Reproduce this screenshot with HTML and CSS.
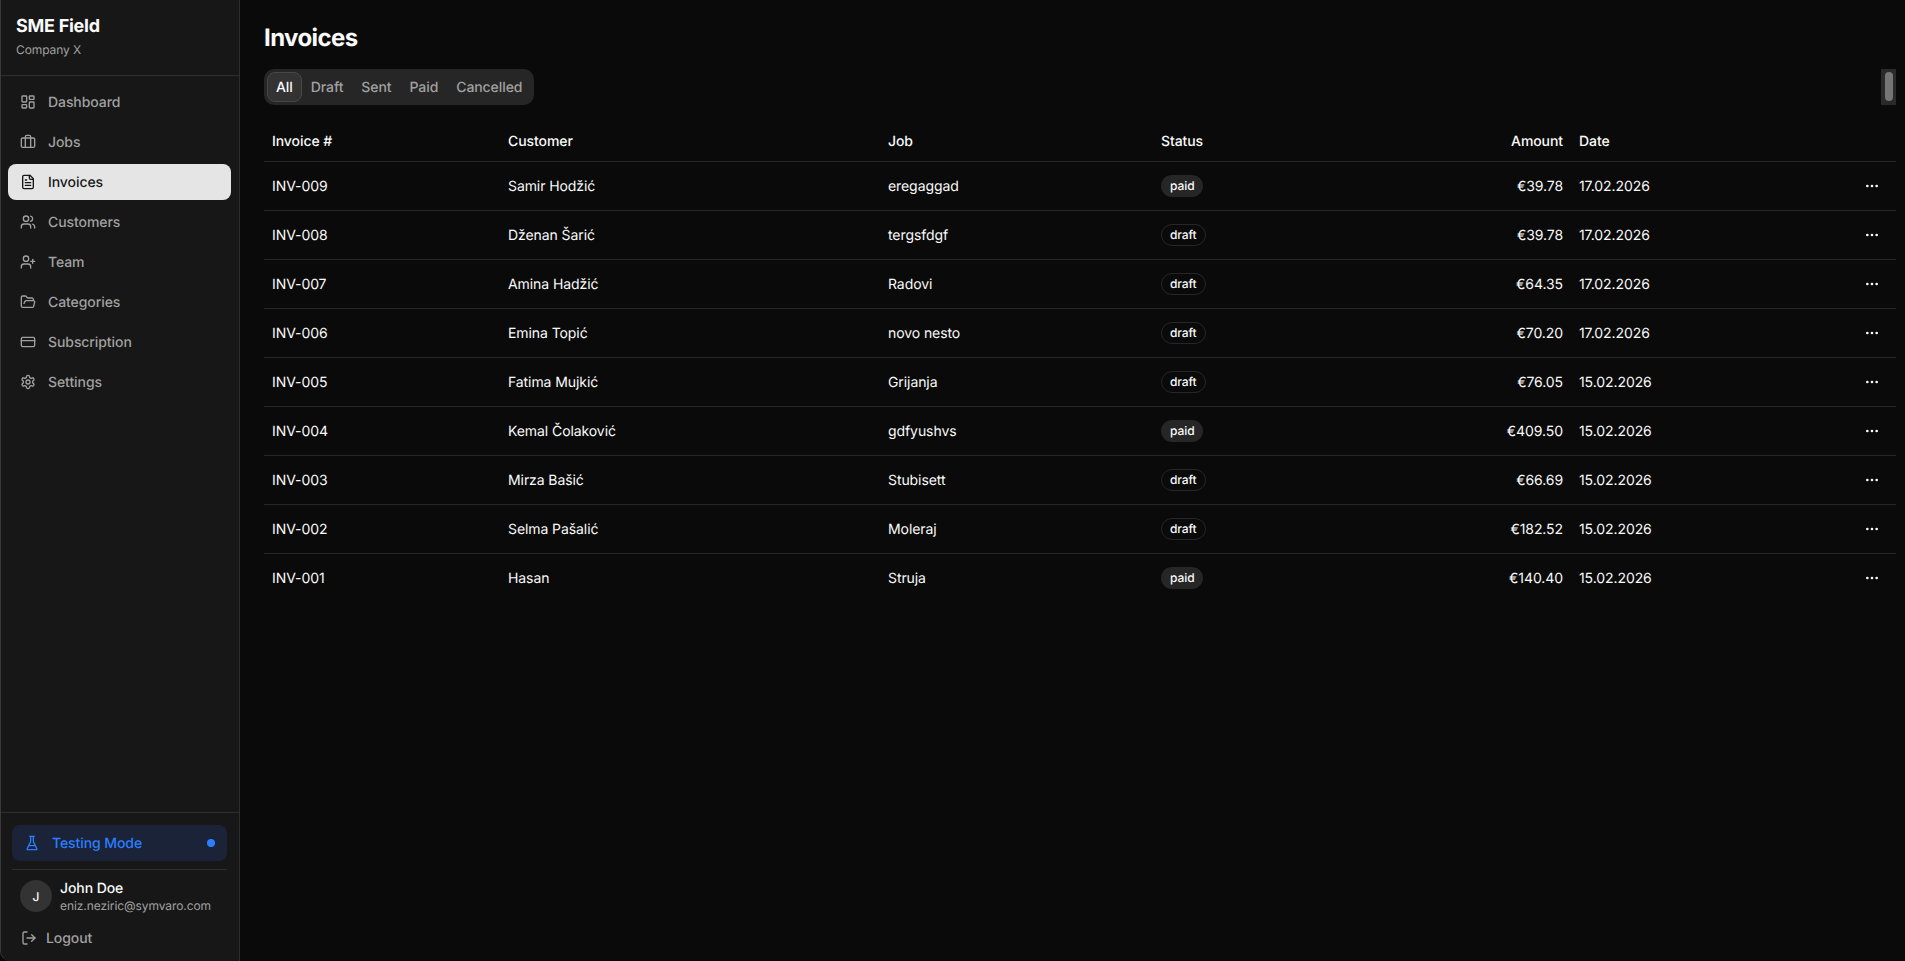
FILE: index.html

```html
<!DOCTYPE html>
<html lang="en">
<head>
  <meta charset="UTF-8">
  <meta name="viewport" content="width=device-width, initial-scale=1.0">
  <title>Invoices</title>
  <link rel="stylesheet" href="styles.css">
</head>
<body>
  <div class="app">
    <aside class="sidebar">
      <div class="brand">
        <div class="brand-name">SME Field</div>
        <div class="brand-company">Company X</div>
      </div>
      <nav class="nav">
        <a href="#" class="nav-item">
          <svg class="icon" viewBox="0 0 24 24"><rect x="3" y="3" width="7" height="9" rx="1"/><rect x="14" y="3" width="7" height="5" rx="1"/><rect x="14" y="12" width="7" height="9" rx="1"/><rect x="3" y="16" width="7" height="5" rx="1"/></svg>
          Dashboard
        </a>
        <a href="#" class="nav-item">
          <svg class="icon" viewBox="0 0 24 24"><path d="M16 20V4a2 2 0 0 0-2-2h-4a2 2 0 0 0-2 2v16"/><rect x="2" y="6" width="20" height="14" rx="2"/></svg>
          Jobs
        </a>
        <a href="#" class="nav-item active">
          <svg class="icon" viewBox="0 0 24 24"><path d="M15 2H6a2 2 0 0 0-2 2v16a2 2 0 0 0 2 2h12a2 2 0 0 0 2-2V7Z"/><path d="M14 2v4a2 2 0 0 0 2 2h4"/><path d="M10 9H8"/><path d="M16 13H8"/><path d="M16 17H8"/></svg>
          Invoices
        </a>
        <a href="#" class="nav-item">
          <svg class="icon" viewBox="0 0 24 24"><path d="M16 21v-2a4 4 0 0 0-4-4H6a4 4 0 0 0-4 4v2"/><circle cx="9" cy="7" r="4"/><path d="M22 21v-2a4 4 0 0 0-3-3.87"/><path d="M16 3.13a4 4 0 0 1 0 7.75"/></svg>
          Customers
        </a>
        <a href="#" class="nav-item">
          <svg class="icon" viewBox="0 0 24 24"><path d="M16 21v-2a4 4 0 0 0-4-4H6a4 4 0 0 0-4 4v2"/><circle cx="9" cy="7" r="4"/><path d="M19 8v6"/><path d="M22 11h-6"/></svg>
          Team
        </a>
        <a href="#" class="nav-item">
          <svg class="icon" viewBox="0 0 24 24"><path d="m6 14 1.5-2.9A2 2 0 0 1 9.24 10H20a2 2 0 0 1 1.94 2.5l-1.54 6a2 2 0 0 1-1.95 1.5H4a2 2 0 0 1-2-2V5a2 2 0 0 1 2-2h3.9a2 2 0 0 1 1.69.9l.81 1.2a2 2 0 0 0 1.67.9H18a2 2 0 0 1 2 2v2"/></svg>
          Categories
        </a>
        <a href="#" class="nav-item">
          <svg class="icon" viewBox="0 0 24 24"><rect x="2" y="5" width="20" height="14" rx="2"/><path d="M2 10h20"/></svg>
          Subscription
        </a>
        <a href="#" class="nav-item">
          <svg class="icon" viewBox="0 0 24 24"><path d="M12.22 2h-.44a2 2 0 0 0-2 2v.18a2 2 0 0 1-1 1.73l-.43.25a2 2 0 0 1-2 0l-.15-.08a2 2 0 0 0-2.73.73l-.22.38a2 2 0 0 0 .73 2.73l.15.1a2 2 0 0 1 1 1.72v.51a2 2 0 0 1-1 1.74l-.15.09a2 2 0 0 0-.73 2.73l.22.38a2 2 0 0 0 2.73.73l.15-.08a2 2 0 0 1 2 0l.43.25a2 2 0 0 1 1 1.73V20a2 2 0 0 0 2 2h.44a2 2 0 0 0 2-2v-.18a2 2 0 0 1 1-1.73l.43-.25a2 2 0 0 1 2 0l.15.08a2 2 0 0 0 2.73-.73l.22-.39a2 2 0 0 0-.73-2.73l-.15-.08a2 2 0 0 1-1-1.74v-.5a2 2 0 0 1 1-1.74l.15-.09a2 2 0 0 0 .73-2.73l-.22-.38a2 2 0 0 0-2.73-.73l-.15.08a2 2 0 0 1-2 0l-.43-.25a2 2 0 0 1-1-1.73V4a2 2 0 0 0-2-2z"/><circle cx="12" cy="12" r="3"/></svg>
          Settings
        </a>
      </nav>
      <div class="sidebar-footer">
        <div class="testing-mode">
          <svg class="icon" viewBox="0 0 24 24"><path d="M10 2v7.53a2 2 0 0 1-.21.9L4.72 20.55A1 1 0 0 0 5.61 22h12.78a1 1 0 0 0 .9-1.45l-5.07-10.12a2 2 0 0 1-.22-.9V2"/><path d="M8.5 2h7"/><path d="M7 16h10"/></svg>
          <span class="testing-label">Testing Mode</span>
          <span class="testing-dot"></span>
        </div>
        <div class="user">
          <div class="avatar">J</div>
          <div>
            <div class="user-name">John Doe</div>
            <div class="user-email">eniz.neziric@symvaro.com</div>
          </div>
        </div>
        <a href="#" class="logout">
          <svg class="icon" viewBox="0 0 24 24"><path d="M9 21H5a2 2 0 0 1-2-2V5a2 2 0 0 1 2-2h4"/><path d="m16 17 5-5-5-5"/><path d="M21 12H9"/></svg>
          Logout
        </a>
      </div>
    </aside>

    <main class="main">
      <h1 class="page-title">Invoices</h1>
      <div class="toolbar">
        <div class="tabs">
          <button class="tab active">All</button>
          <button class="tab">Draft</button>
          <button class="tab">Sent</button>
          <button class="tab">Paid</button>
          <button class="tab">Cancelled</button>
        </div>
        <div class="scroll-track"><div class="scroll-thumb"></div></div>
      </div>

      <table class="invoices">
        <thead>
          <tr>
            <th class="col-number">Invoice #</th>
            <th class="col-customer">Customer</th>
            <th class="col-job">Job</th>
            <th class="col-status">Status</th>
            <th class="col-amount">Amount</th>
            <th class="col-date">Date</th>
            <th class="col-actions"></th>
          </tr>
        </thead>
        <tbody id="InvoiceTableBody">
          <tr>
            <td>INV-009</td><td>Samir Hodžić</td><td>eregaggad</td>
            <td class="cell-control"><span class="badge paid">paid</span></td>
            <td class="col-amount">€39.78</td><td>17.02.2026</td>
            <td class="col-actions cell-control"><button class="more"><svg class="icon" viewBox="0 0 24 24"><circle cx="12" cy="12" r="1"/><circle cx="19" cy="12" r="1"/><circle cx="5" cy="12" r="1"/></svg></button></td>
          </tr>
          <tr>
            <td>INV-008</td><td>Dženan Šarić</td><td>tergsfdgf</td>
            <td class="cell-control"><span class="badge draft">draft</span></td>
            <td class="col-amount">€39.78</td><td>17.02.2026</td>
            <td class="col-actions cell-control"><button class="more"><svg class="icon" viewBox="0 0 24 24"><circle cx="12" cy="12" r="1"/><circle cx="19" cy="12" r="1"/><circle cx="5" cy="12" r="1"/></svg></button></td>
          </tr>
          <tr>
            <td>INV-007</td><td>Amina Hadžić</td><td>Radovi</td>
            <td class="cell-control"><span class="badge draft">draft</span></td>
            <td class="col-amount">€64.35</td><td>17.02.2026</td>
            <td class="col-actions cell-control"><button class="more"><svg class="icon" viewBox="0 0 24 24"><circle cx="12" cy="12" r="1"/><circle cx="19" cy="12" r="1"/><circle cx="5" cy="12" r="1"/></svg></button></td>
          </tr>
          <tr>
            <td>INV-006</td><td>Emina Topić</td><td>novo nesto</td>
            <td class="cell-control"><span class="badge draft">draft</span></td>
            <td class="col-amount">€70.20</td><td>17.02.2026</td>
            <td class="col-actions cell-control"><button class="more"><svg class="icon" viewBox="0 0 24 24"><circle cx="12" cy="12" r="1"/><circle cx="19" cy="12" r="1"/><circle cx="5" cy="12" r="1"/></svg></button></td>
          </tr>
          <tr>
            <td>INV-005</td><td>Fatima Mujkić</td><td>Grijanja</td>
            <td class="cell-control"><span class="badge draft">draft</span></td>
            <td class="col-amount">€76.05</td><td>15.02.2026</td>
            <td class="col-actions cell-control"><button class="more"><svg class="icon" viewBox="0 0 24 24"><circle cx="12" cy="12" r="1"/><circle cx="19" cy="12" r="1"/><circle cx="5" cy="12" r="1"/></svg></button></td>
          </tr>
          <tr>
            <td>INV-004</td><td>Kemal Čolaković</td><td>gdfyushvs</td>
            <td class="cell-control"><span class="badge paid">paid</span></td>
            <td class="col-amount">€409.50</td><td>15.02.2026</td>
            <td class="col-actions cell-control"><button class="more"><svg class="icon" viewBox="0 0 24 24"><circle cx="12" cy="12" r="1"/><circle cx="19" cy="12" r="1"/><circle cx="5" cy="12" r="1"/></svg></button></td>
          </tr>
          <tr>
            <td>INV-003</td><td>Mirza Bašić</td><td>Stubisett</td>
            <td class="cell-control"><span class="badge draft">draft</span></td>
            <td class="col-amount">€66.69</td><td>15.02.2026</td>
            <td class="col-actions cell-control"><button class="more"><svg class="icon" viewBox="0 0 24 24"><circle cx="12" cy="12" r="1"/><circle cx="19" cy="12" r="1"/><circle cx="5" cy="12" r="1"/></svg></button></td>
          </tr>
          <tr>
            <td>INV-002</td><td>Selma Pašalić</td><td>Moleraj</td>
            <td class="cell-control"><span class="badge draft">draft</span></td>
            <td class="col-amount">€182.52</td><td>15.02.2026</td>
            <td class="col-actions cell-control"><button class="more"><svg class="icon" viewBox="0 0 24 24"><circle cx="12" cy="12" r="1"/><circle cx="19" cy="12" r="1"/><circle cx="5" cy="12" r="1"/></svg></button></td>
          </tr>
          <tr>
            <td>INV-001</td><td>Hasan</td><td>Struja</td>
            <td class="cell-control"><span class="badge paid">paid</span></td>
            <td class="col-amount">€140.40</td><td>15.02.2026</td>
            <td class="col-actions cell-control"><button class="more"><svg class="icon" viewBox="0 0 24 24"><circle cx="12" cy="12" r="1"/><circle cx="19" cy="12" r="1"/><circle cx="5" cy="12" r="1"/></svg></button></td>
          </tr>
        </tbody>
      </table>
    </main>
  </div>
</body>
</html>
```

FILE: styles.css

```css
* {
  box-sizing: border-box;
}
body {
  font-family: Inter, "Liberation Sans", sans-serif;
  margin: 0;
  padding: 0;
  background-color: #0a0a0a;
  color: #fafafa;
  font-size: 14px;
  letter-spacing: -0.08px;
  text-rendering: geometricPrecision;
}
a {
  text-decoration: none;
  color: inherit;
}
.app {
  display: flex;
  height: 961px;
  overflow: hidden;
}
.icon {
  width: 16px;
  height: 16px;
  flex: none;
  fill: none;
  stroke: currentColor;
  stroke-width: 2;
  stroke-linecap: round;
  stroke-linejoin: round;
}

/* sidebar */
.sidebar {
  width: 240px;
  flex: none;
  display: flex;
  flex-direction: column;
  background-color: #171717;
  border-left: 1px solid #3a3a3a;
  border-right: 1px solid #2e2e2e;
  border-bottom-left-radius: 10px;
}
.brand {
  height: 76px;
  padding: 16px 15px 0;
  border-bottom: 1px solid #2e2e2e;
}
.brand-name {
  font-size: 18px;
  font-weight: 700;
  line-height: 22px;
  letter-spacing: -0.015em;
}
.brand-company {
  font-size: 12px;
  line-height: 16px;
  margin-top: 4px;
  color: #a1a1a1;
}
.nav {
  flex: 1;
  display: flex;
  flex-direction: column;
  gap: 4px;
  padding: 8px 8px 8px 7px;
}
.nav-item {
  display: flex;
  align-items: center;
  gap: 12px;
  height: 36px;
  padding: 0 12px;
  border-radius: 8px;
  font-weight: 500;
  color: #a1a1a1;
}
.nav-item.active {
  background-color: #e5e5e5;
  color: #171717;
}
.sidebar-footer {
  border-top: 1px solid #2e2e2e;
  padding: 12px 12px 0 11px;
  height: 149px;
}
.testing-mode {
  display: flex;
  align-items: center;
  height: 36px;
  padding: 0 12px;
  border-radius: 8px;
  background-color: #1a2338;
  color: #2b7fff;
  font-weight: 500;
}
.testing-label {
  flex: 1;
  margin-left: 12px;
}
.testing-dot {
  width: 8px;
  height: 8px;
  border-radius: 50%;
  background-color: #2b7fff;
}
.user {
  display: flex;
  align-items: flex-start;
  gap: 8px;
  margin-top: 8px;
  padding: 10px 8px 0;
  border-top: 1px solid #2e2e2e;
}
.avatar {
  width: 32px;
  height: 32px;
  border-radius: 50%;
  display: flex;
  align-items: center;
  justify-content: center;
  background-color: #333;
  font-size: 12px;
  font-weight: 500;
}
.user-name {
  font-weight: 500;
  line-height: 18px;
}
.user-email {
  font-size: 12px;
  line-height: 16px;
  color: #a1a1a1;
}
.logout {
  display: flex;
  align-items: center;
  gap: 9px;
  margin-top: 6px;
  padding-left: 9px;
  height: 36px;
  font-weight: 500;
  color: #a1a1a1;
}

/* main */
.main {
  flex: 1;
  padding: 22px 9px 0 24px;
  min-width: 0;
}
.page-title {
  font-size: 24px;
  line-height: 32px;
  font-weight: 700;
  letter-spacing: -0.025em;
  margin: 0 0 15px;
}
.toolbar {
  display: flex;
  justify-content: space-between;
  align-items: flex-start;
  margin-bottom: 16px;
}
.tabs {
  display: inline-flex;
  align-items: center;
  height: 36px;
  padding: 3px;
  border-radius: 10px;
  background-color: #262626;
}
.tab {
  font-family: inherit;
  font-size: 14px;
  font-weight: 500;
  letter-spacing: inherit;
  text-rendering: inherit;
  height: 30px;
  padding: 0 8px;
  background: none;
  border: 1px solid transparent;
  border-radius: 8px;
  color: #a1a1a1;
}
.tab.active {
  background-color: #333;
  border-color: #474747;
  color: #fafafa;
}
.scroll-track {
  width: 15px;
  height: 36px;
  padding: 3px 4px;
  background-color: #2a2a2a;
}
.scroll-thumb {
  width: 8px;
  height: 29px;
  border-radius: 4px;
  background-color: #757575;
}

/* table */
.invoices {
  width: 100%;
  table-layout: fixed;
  border-collapse: collapse;
}
th, td {
  padding: 9px 8px 7px;
  text-align: left;
  border-bottom: 1px solid #262626;
}
th {
  height: 40px;
  font-weight: 500;
}
td {
  height: 49px;
}
td.cell-control {
  padding: 8px;
}
tbody tr:last-child td {
  border-bottom: none;
}
.col-number { width: 236px; }
.col-customer { width: 380px; }
.col-job { width: 273px; }
.col-status { width: 290px; }
.col-amount { width: 128px; text-align: right; }
.col-actions { text-align: right; }
.badge {
  display: inline-block;
  font-size: 12px;
  font-weight: 500;
  line-height: 16px;
  padding: 2px 8px;
  border-radius: 999px;
  border: 1px solid transparent;
}
.badge.paid {
  background-color: #262626;
}
.badge.draft {
  border-color: #262626;
}
.more {
  width: 32px;
  height: 32px;
  padding: 0;
  display: inline-flex;
  align-items: center;
  justify-content: center;
  background: none;
  border: none;
  color: #fafafa;
  vertical-align: middle;
}
```
